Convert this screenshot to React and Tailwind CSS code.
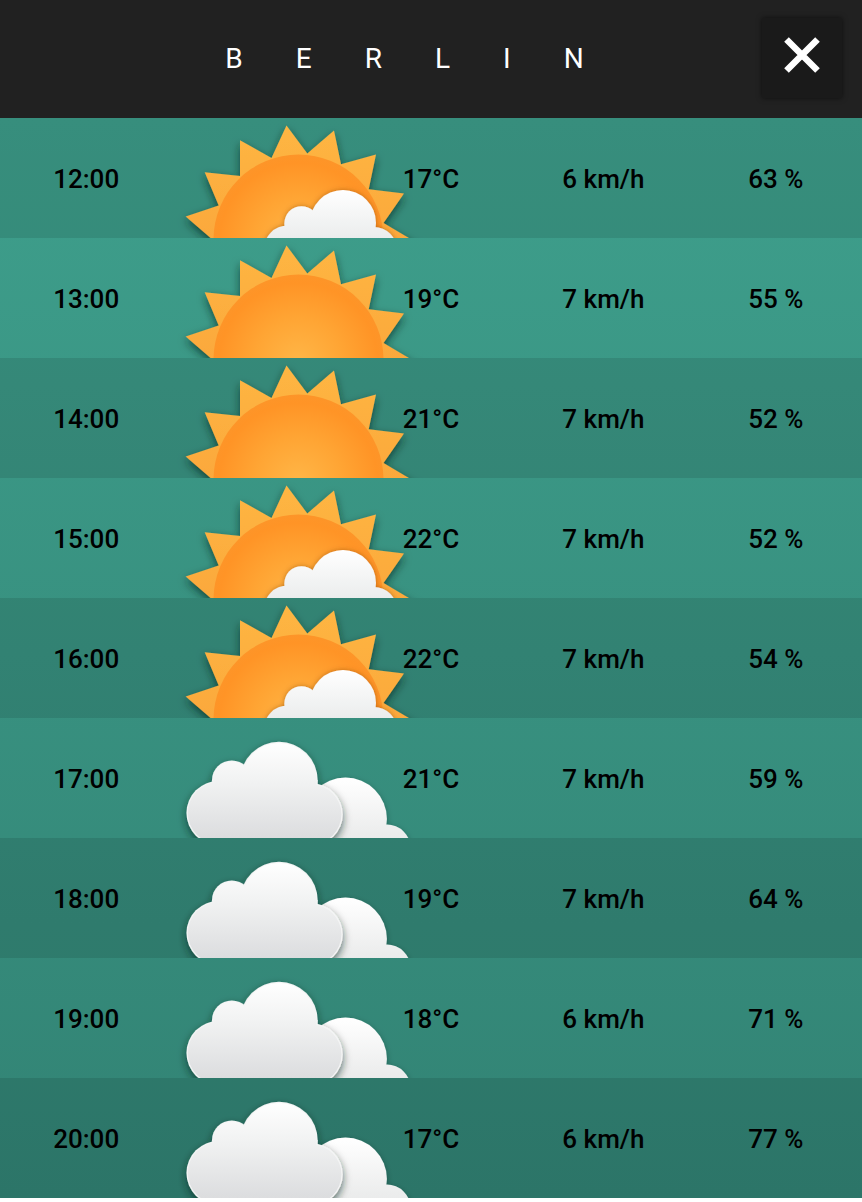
const HOURS = [
  { time: '12:00', sky: 'partly', temp: '17°C', wind: '6 km/h', humidity: '63 %' },
  { time: '13:00', sky: 'sunny', temp: '19°C', wind: '7 km/h', humidity: '55 %' },
  { time: '14:00', sky: 'sunny', temp: '21°C', wind: '7 km/h', humidity: '52 %' },
  { time: '15:00', sky: 'partly', temp: '22°C', wind: '7 km/h', humidity: '52 %' },
  { time: '16:00', sky: 'partly', temp: '22°C', wind: '7 km/h', humidity: '54 %' },
  { time: '17:00', sky: 'cloudy', temp: '21°C', wind: '7 km/h', humidity: '59 %' },
  { time: '18:00', sky: 'cloudy', temp: '19°C', wind: '7 km/h', humidity: '64 %' },
  { time: '19:00', sky: 'cloudy', temp: '18°C', wind: '6 km/h', humidity: '71 %' },
  { time: '20:00', sky: 'cloudy', temp: '17°C', wind: '6 km/h', humidity: '77 %' },
];

const SKY_LABELS = { partly: 'Partly cloudy', sunny: 'Sunny', cloudy: 'Cloudy' };

// Gradients and shadows shared by every weather icon.
function IconDefs() {
  return (
    <svg className="absolute h-0 w-0" aria-hidden="true">
      <defs>
        <radialGradient id="disc" gradientUnits="userSpaceOnUse" cx="128.5" cy="124" r="88">
          <stop offset="0" stopColor="#ffb647" />
          <stop offset="0.5" stopColor="#ffa534" />
          <stop offset="0.9" stopColor="#ff9426" />
          <stop offset="1" stopColor="#fd9529" />
        </radialGradient>
        <linearGradient id="rays" gradientUnits="userSpaceOnUse" x1="0" y1="6" x2="0" y2="124">
          <stop offset="0" stopColor="#feb643" />
          <stop offset="1" stopColor="#fba83b" />
        </linearGradient>
        <linearGradient id="smallCloud" gradientUnits="userSpaceOnUse" x1="0" y1="72" x2="0" y2="124">
          <stop offset="0" stopColor="#ffffff" />
          <stop offset="1" stopColor="#e9ebeb" />
        </linearGradient>
        <linearGradient id="frontCloud" gradientUnits="userSpaceOnUse" x1="0" y1="24" x2="0" y2="124">
          <stop offset="0" stopColor="#ffffff" />
          <stop offset="0.4" stopColor="#f1f2f2" />
          <stop offset="1" stopColor="#dadbdd" />
        </linearGradient>
        <linearGradient id="backCloud" gradientUnits="userSpaceOnUse" x1="0" y1="60" x2="0" y2="124">
          <stop offset="0" stopColor="#ffffff" />
          <stop offset="1" stopColor="#e9eaea" />
        </linearGradient>
        <filter id="shadow" filterUnits="userSpaceOnUse" x="-10" y="-10" width="290" height="180">
          <feDropShadow dx="0" dy="4" stdDeviation="4" floodColor="#04201b" floodOpacity="0.65" />
        </filter>
        <filter id="softShadow" filterUnits="userSpaceOnUse" x="-10" y="-10" width="290" height="180">
          <feDropShadow dx="0" dy="2" stdDeviation="3" floodColor="#04201b" floodOpacity="0.3" />
        </filter>
        <filter id="sunCloudShadow" filterUnits="userSpaceOnUse" x="-10" y="-10" width="290" height="180">
          <feDropShadow dx="0" dy="0" stdDeviation="2.5" floodColor="#8a4300" floodOpacity="0.55" />
        </filter>
      </defs>
    </svg>
  );
}

function Sun() {
  return (
    <>
      <path
        filter="url(#shadow)"
        fill="url(#rays)"
        d="M15.7 98.5 48.7 87.5 34.7 54.3 70 58 70 22.3 101.5 40 116.5 7.5 137.3 35.5 164 12.5 171 46.3 206 36.5 198.7 71.3 234 75.5 213.5 105 249 126 249 140 43 140 43 122Z"
      />
      <circle cx="128.5" cy="121.5" r="85" fill="url(#disc)" />
    </>
  );
}

function SmallCloud() {
  return (
    <g filter="url(#sunCloudShadow)">
      <g fill="url(#smallCloud)">
        <circle cx="173" cy="105" r="33" />
        <circle cx="131.5" cy="105.5" r="17.2" />
        <circle cx="118" cy="132" r="24.5" />
        <circle cx="204" cy="132" r="23" />
        <path d="M116 108H204V140H116Z" />
      </g>
    </g>
  );
}

function Clouds() {
  return (
    <>
      <g filter="url(#softShadow)">
        <g fill="url(#backCloud)">
          <circle cx="175.5" cy="101" r="41.4" />
          <circle cx="216.5" cy="131" r="24.5" />
          <path d="M150 108H216V140H150Z" />
        </g>
      </g>
      <g filter="url(#shadow)">
        <g fill="#f4f5f5">
          <circle cx="109" cy="62.3" r="38.6" />
          <circle cx="61.8" cy="62.2" r="19.8" />
          <circle cx="48.5" cy="95" r="32" />
          <circle cx="141.7" cy="96.4" r="31" />
          <path d="M48 62H147.6V66L141.7 127H48.5L46 64Z" />
        </g>
      </g>
      <g fill="url(#frontCloud)">
        <circle cx="109" cy="62.3" r="37.3" />
        <circle cx="61.8" cy="62.2" r="18.5" />
        <circle cx="48.5" cy="95" r="30.7" />
        <circle cx="141.7" cy="96.4" r="29.7" />
        <path d="M48 64H146.3V67L141.7 126H48.5Z" />
      </g>
    </>
  );
}

function SkyIcon({ sky }) {
  return (
    <svg
      role="img"
      aria-label={SKY_LABELS[sky]}
      viewBox="2 0 258 120"
      className="block h-[120px] w-[258px] max-w-none overflow-hidden"
    >
      {sky === 'cloudy' ? <Clouds /> : <Sun />}
      {sky === 'partly' && <SmallCloud />}
    </svg>
  );
}

export default function App() {
  return (
    <main className="bg-white font-[Roboto,sans-serif]">
      <IconDefs />
      <header className="grid grid-cols-[1fr_auto_1fr] items-center bg-[#212121] px-5 pt-[18px] pb-5">
        <h1 className="col-start-2 pt-0.5 text-[28px] leading-8 font-normal tracking-[53px] text-white uppercase">
          Berlin
        </h1>
        <button
          type="button"
          aria-label="Close"
          className="flex size-20 items-center justify-center justify-self-end bg-[#1a1a1a] pb-1.5 text-white shadow-[0_0_5px_rgba(0,0,0,0.6)]"
        >
          <svg viewBox="0 0 36 36" className="size-9" aria-hidden="true">
            <path d="M2.5 2.5 33.5 33.5M33.5 2.5 2.5 33.5" stroke="currentColor" strokeWidth="6.5" fill="none" />
          </svg>
        </button>
      </header>
      <table
        aria-label="Hourly forecast for Berlin"
        className="w-full table-fixed border-collapse bg-linear-to-b from-[#3e9f8c] to-[#328374] text-center text-[26px] leading-8 font-medium text-black"
      >
        <tbody>
          {HOURS.map((hour) => (
            <tr key={hour.time} className="h-[120px] odd:bg-black/10">
              <th scope="row" className="p-0 pt-0.5 font-medium">{hour.time}</th>
              <td className="p-0">
                <SkyIcon sky={hour.sky} />
              </td>
              <td className="relative p-0 pt-0.5">{hour.temp}</td>
              <td className="p-0 pt-0.5">{hour.wind}</td>
              <td className="p-0 pt-0.5">{hour.humidity}</td>
            </tr>
          ))}
        </tbody>
      </table>
    </main>
  );
}
